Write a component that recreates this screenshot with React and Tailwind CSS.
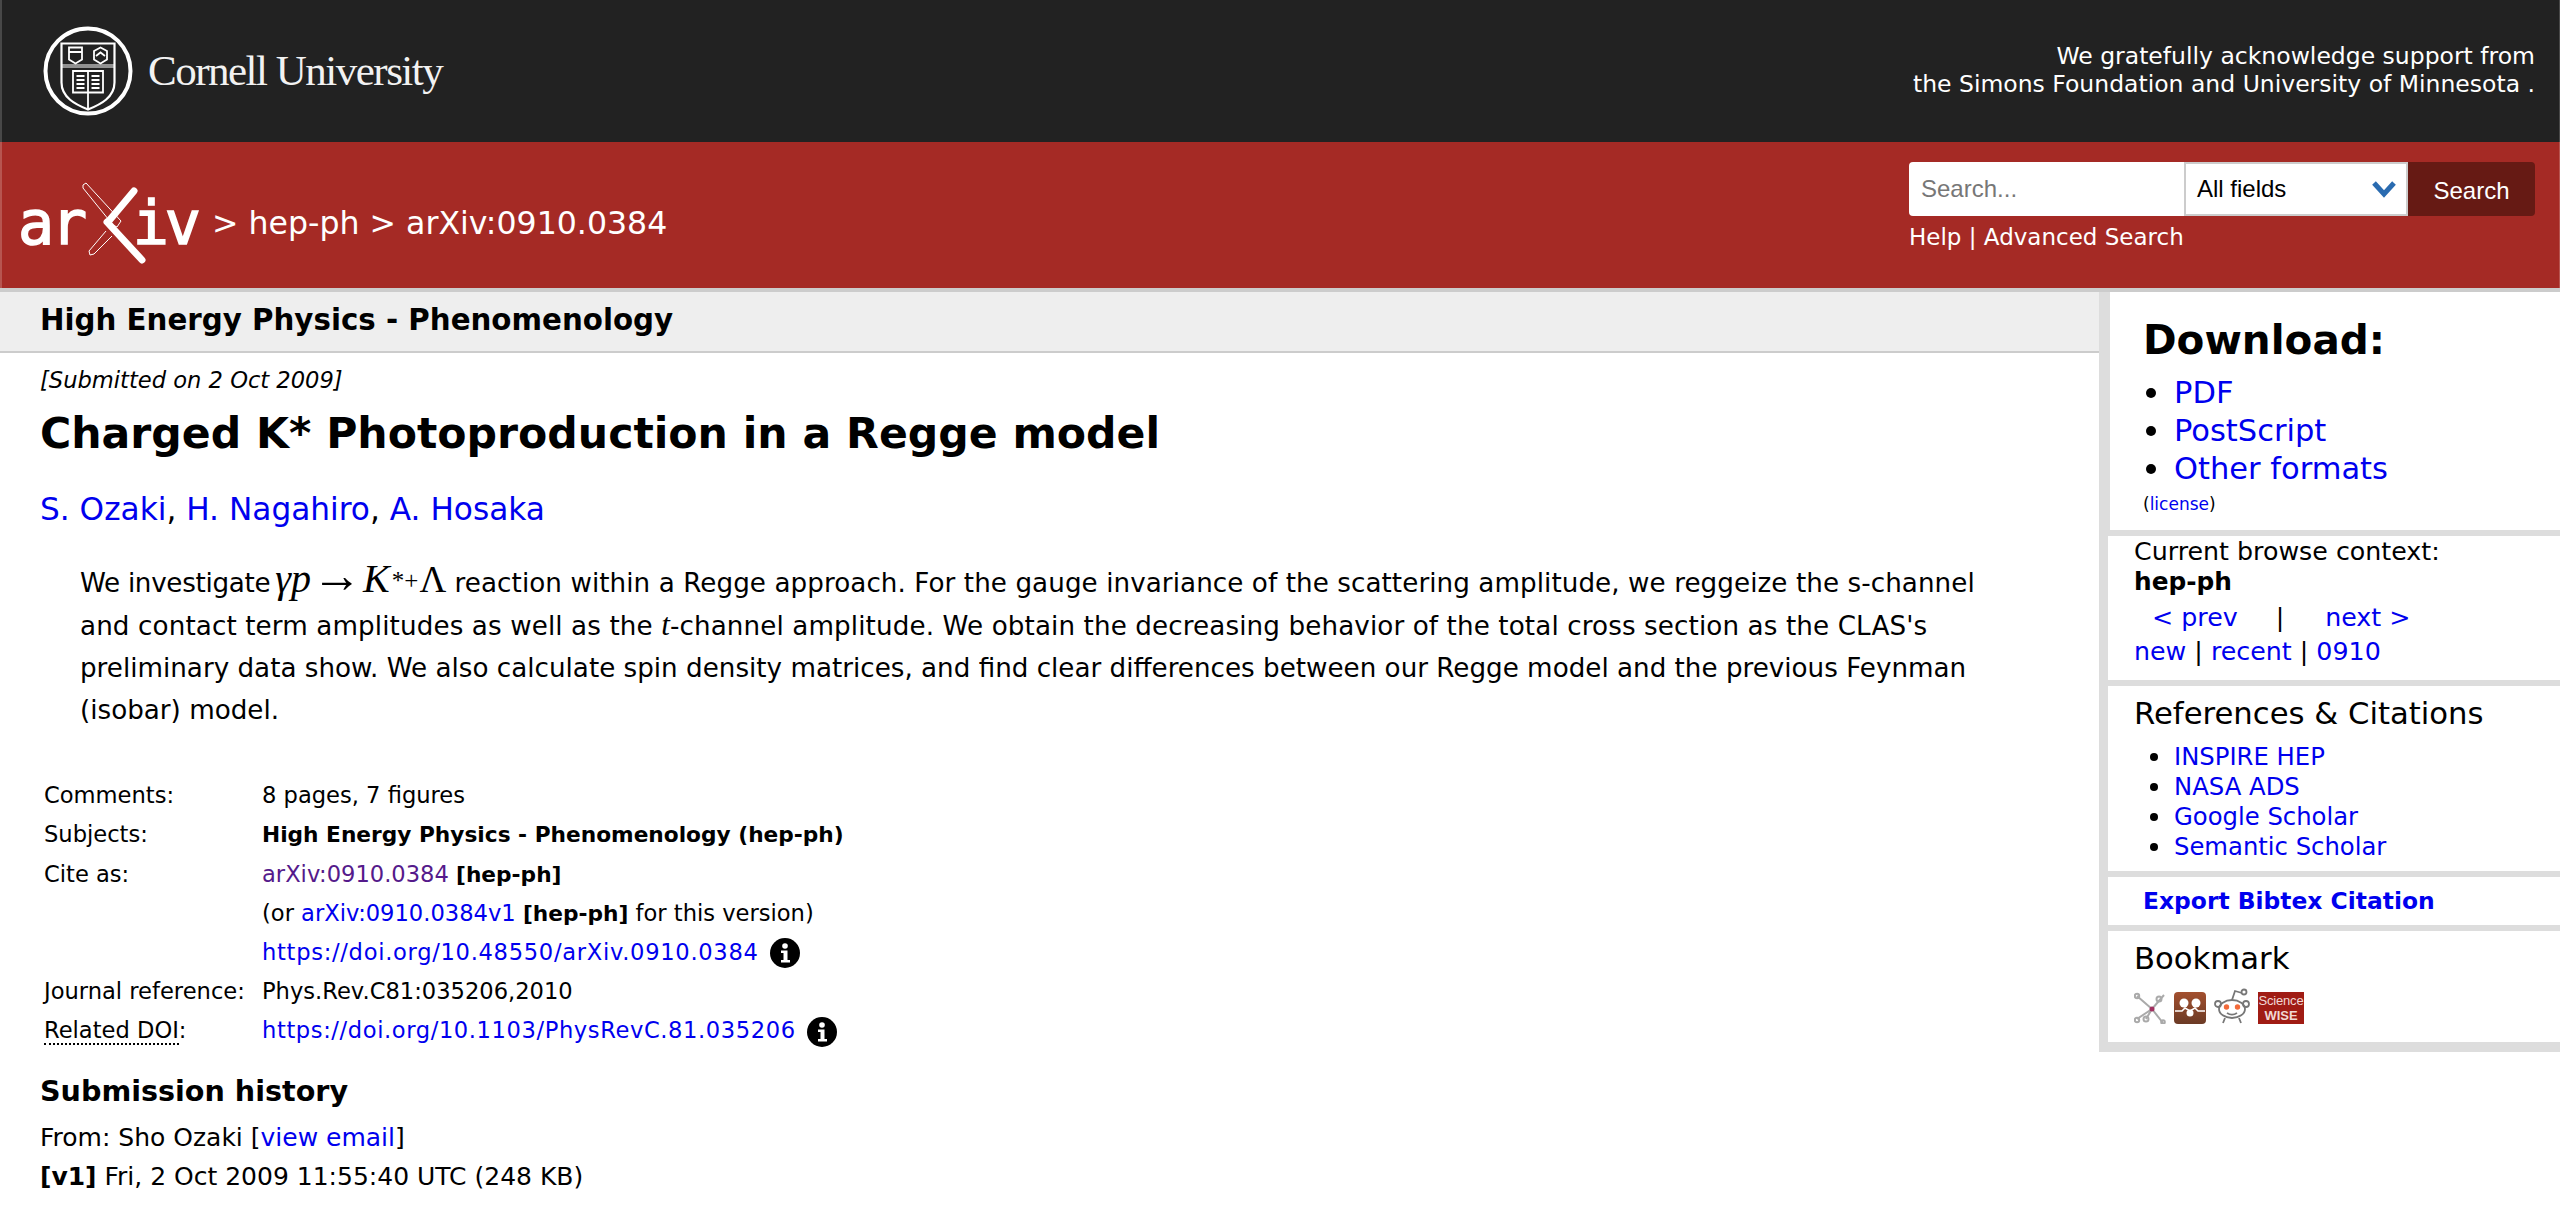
import React from "react";

function CornellSeal() {
  return (
    <svg width="92" height="92" viewBox="0 0 92 92" fill="none" stroke="#fff" className="shrink-0">
      <circle cx="46" cy="46" r="42.5" strokeWidth="4" />
      <path d="M19.5 18.5h53v39c0 15-14 22-26.500 27-12.500-5-26.500-12-26.500-27z" strokeWidth="2.200" />
      <path d="M19.500 40h53M19 42h54" strokeWidth="1.200" />
      <path d="M27 22.500h13v12l-6.500 4-6.500-4zM27 27h13" strokeWidth="1.800" />
      <path d="M52 26l6.500-3.500 6.500 3.500v8.500l-6.500 4-6.500-4zM54 31l4.500-3.500 4.500 3.500" strokeWidth="1.800" />
      <path d="M31 46h30v21.500H31zM46 46v38" strokeWidth="1.800" />
      <path d="M34.500 51h8M34.500 55h8M34.500 59h8M34.500 63h8M49.500 51h8M49.500 55h8M49.500 59h8M49.500 63h8" strokeWidth="2" />
    </svg>
  );
}

function ArxivLogo() {
  return (
    <div className="relative w-[178px] h-[84px] shrink-0 flex justify-between font-['DejaVu_Sans_Mono',monospace] text-[60px] leading-[84px] text-white [-webkit-text-stroke:1.5px_white]">
      <span className="tracking-[-3px] -ml-[2px]">ar</span>
      <span className="tracking-[-4px] mr-[1px]">iv</span>
      <svg width="178" height="84" viewBox="0 0 178 84" className="absolute left-0 top-0">
        <path d="M114 10L88 41" stroke="#fff" strokeWidth="7" strokeLinecap="round" />
        <path d="M87 41L122 79" stroke="#fff" strokeWidth="7" strokeLinecap="round" />
        <path d="M63 4l3-2 35 38-4 6-4-2L63 7zM92 55L74 73l-4 1-1-4 17-20" fill="none" stroke="#fff" strokeWidth="1" />
      </svg>
    </div>
  );
}

function InfoIcon() {
  return (
    <svg width="30" height="30" viewBox="0 0 30 30" className="inline-block align-middle">
      <circle cx="15" cy="15" r="15" fill="#000" />
      <circle cx="15" cy="8" r="2.800" fill="#fff" />
      <path d="M11 12.500h6.500v9.500H20v2.500h-9V22h2.500v-7H11z" fill="#fff" />
    </svg>
  );
}

function BookmarkIcons() {
  return (
    <div className="flex items-end gap-[8px] mt-[9px]">
      <svg width="32" height="32" viewBox="0 0 32 32" fill="none" stroke="#aaa" strokeWidth="2">
        <path d="M3 4l15 13M30 3L18 17M18 17l11 14M18 17L3 27M18 17L12 27" />
        <circle cx="3" cy="4" r="2.200" />
        <circle cx="25" cy="7" r="2.500" />
        <circle cx="29" cy="30" r="1.800" />
        <circle cx="3" cy="28" r="2.200" />
        <circle cx="12" cy="27" r="2.500" />
        <circle cx="18" cy="17" r="2.500" fill="#a03060" stroke="none" />
      </svg>
      <svg width="32" height="32" viewBox="0 0 32 32">
        <defs>
          <linearGradient id="bibsonomy" x1="0" y1="0" x2="0" y2="1">
            <stop offset="0" stopColor="#a3502f" />
            <stop offset="1" stopColor="#6b3a25" />
          </linearGradient>
        </defs>
        <rect width="32" height="32" rx="4" fill="url(#bibsonomy)" />
        <circle cx="10" cy="11" r="4.500" fill="#fff" />
        <circle cx="22" cy="11" r="4.500" fill="#fff" />
        <circle cx="16" cy="21" r="3.500" fill="#fff" />
        <path d="M1 19h7l3-3 5 3 5-3 3 3h7" fill="none" stroke="#fff" strokeWidth="1.500" />
      </svg>
      <svg width="36" height="36" viewBox="0 0 36 36" fill="none" stroke="#777" strokeWidth="1.800">
        <ellipse cx="18" cy="21" rx="13" ry="9" fill="#fff" />
        <circle cx="4" cy="16" r="3" />
        <circle cx="32" cy="16" r="3" />
        <path d="M18 12l3-9 7 2M11 30l-2 5M25 30l2 5" />
        <circle cx="30" cy="4" r="2.500" />
        <circle cx="12.500" cy="19" r="2.700" fill="#f26a3a" stroke="none" />
        <circle cx="23.500" cy="19" r="2.700" fill="#f26a3a" stroke="none" />
        <path d="M13 25c3 2 7 2 10 0" />
      </svg>
      <div className="w-[46px] h-[32px] bg-[#a01c14] text-[#f0d8d4] flex flex-col items-center justify-center font-['Liberation_Sans',sans-serif] text-[13px] leading-[15px]">
        <span className="tracking-[-0.200px]">Science</span>
        <span className="font-bold">WISE</span>
      </div>
    </div>
  );
}

function MetaRow({ label, children }) {
  return (
    <div className="flex items-center h-[39.200px]">
      <div className="w-[218px] shrink-0">{label}</div>
      <div>{children}</div>
    </div>
  );
}

function ListItem({ dot, w, left, children }) {
  return (
    <li className="flex items-center">
      <span className={`${w} shrink-0 ${left}`}>
        <span className={`block rounded-full bg-black ${dot}`} />
      </span>
      <span className={link}>{children}</span>
    </li>
  );
}

const link = "text-[#0000ee]";

export default function App() {
  return (
    <div className="font-['DejaVu_Sans',sans-serif] text-black bg-white h-[1225px] overflow-hidden">
      <div className="h-[142px] bg-[#222222] border-l-[2px] border-r-[1px] border-[#484848] flex items-center justify-between pl-[40px] pr-[24px] text-white">
        <div className="flex items-center gap-[14px]">
          <CornellSeal />
          <span className="font-['Liberation_Serif',serif] text-[43px] tracking-[-1.500px] text-[#f2f2f2]">Cornell University</span>
        </div>
        <div className="text-right text-[23.500px] leading-[28px] pb-[3px]">
          We gratefully acknowledge support from<br />the Simons Foundation and University of Minnesota .
        </div>
      </div>

      <div className="h-[146px] bg-[#a52a25] border-l-[2px] border-r-[1px] border-[#b75550] flex justify-between pl-[18px] pr-[24px] text-white">
        <div className="flex items-center gap-[14px] pt-[16px]">
          <ArxivLogo />
          <span className="text-[31.600px] leading-[40px]">&gt; hep-ph &gt; arXiv:0910.0384</span>
        </div>
        <div className="pt-[20px] w-[626px]">
          <div className="flex h-[54px] font-['Liberation_Sans',sans-serif] text-[24px]">
            <div className="w-[275px] bg-white rounded-l-[4px] text-[#777777] pl-[12px] flex items-center">Search...</div>
            <div className="w-[224px] bg-white border-[2px] border-[#cccccc] text-black pl-[11px] flex items-center justify-between pr-[10px]">
              All fields
              <svg width="24" height="18" viewBox="0 0 24 18" fill="none" stroke="#2a6bb0" strokeWidth="5">
                <path d="M2 3l10 11L22 3" />
              </svg>
            </div>
            <div className="w-[127px] bg-[#661a14] rounded-r-[4px] flex items-center justify-center text-white pt-[4px]">Search</div>
          </div>
          <div className="text-[23px] mt-[4px]">Help | Advanced Search</div>
        </div>
      </div>

      <div className="h-[4px] bg-[#cccccc]" />

      <div className="flex items-start">
        <div className="flex-1 min-w-0">
          <div className="h-[61px] bg-[#eeeeee] border-b-[2px] border-[#cccccc] pl-[40px] flex items-center text-[29.300px] font-bold pb-[2px]">
            High Energy Physics - Phenomenology
          </div>
          <div className="pl-[40px] pr-[60px]">
            <div className="italic text-[22.600px] mt-[11px]">[Submitted on 2 Oct 2009]</div>
            <h1 className="text-[42.600px] font-bold mt-[5px] leading-[60px]">Charged K* Photoproduction in a Regge model</h1>
            <div className="text-[31.200px] mt-[26px] leading-[40px]">
              <span className={link}>S. Ozaki</span>, <span className={link}>H. Nagahiro</span>, <span className={link}>A. Hosaka</span>
            </div>
            <div className="pl-[40px] mt-[33.500px] text-[26.200px] leading-[42.300px]">
              <span className="tracking-[-0.300px]">We investigate</span>
              <span className="font-['Liberation_Serif',serif] text-[40px] leading-[20px] ml-[-5px]">
                {" "}<i>γp</i> <span className="text-[50px] leading-[20px] mx-[-9px]">→</span> <i>K</i><sup className="text-[25px] leading-[10px] relative top-[-3px] ml-[2px]">*+</sup>
                <span className="text-[37px] ml-[1px]">Λ</span>
              </span>{" "}
              <span className="tracking-[0.070px]">reaction within a Regge approach. For the gauge invariance of the scattering amplitude, we reggeize the s-channel</span><br />
              <span className="tracking-[0.110px]">and contact term amplitudes as well as the <i className="font-['Liberation_Serif',serif] text-[31px] leading-[20px]">t</i>-channel amplitude. We obtain the decreasing behavior of the total cross section as the CLAS's</span><br />
              preliminary data show. We also calculate spin density matrices, and find clear differences between our Regge model and the previous Feynman<br />
              (isobar) model.
            </div>
            <div className="pl-[4px] mt-[45px] text-[22.600px]">
              <MetaRow label="Comments:">8 pages, 7 figures</MetaRow>
              <MetaRow label="Subjects:"><b className="text-[21.700px]">High Energy Physics - Phenomenology (hep-ph)</b></MetaRow>
              <MetaRow label="Cite as:"><span className="text-[#551a8b]">arXiv:0910.0384</span> <b className="text-[21.700px]">[hep-ph]</b></MetaRow>
              <MetaRow label="">(or <span className={link}>arXiv:0910.0384v1</span> <b className="text-[21.700px]">[hep-ph]</b> for this version)</MetaRow>
              <MetaRow label=""><span className={`${link} tracking-[0.700px]`}>https://doi.org/10.48550/arXiv.0910.0384</span> <span className="ml-[4px]"><InfoIcon /></span></MetaRow>
              <MetaRow label="Journal reference:">Phys.Rev.C81:035206,2010</MetaRow>
              <MetaRow label={<span><span className="border-b-[2px] border-dotted border-black">Related DOI</span>:</span>}>
                <span className={`${link} tracking-[0.600px]`}>https://doi.org/10.1103/PhysRevC.81.035206</span> <span className="ml-[4px]"><InfoIcon /></span>
              </MetaRow>
            </div>
            <div className="text-[28.600px] font-bold mt-[20.500px] leading-[40px]">Submission history</div>
            <div className="text-[25px] leading-[39px] mt-[7px]">
              From: Sho Ozaki [<span className={link}>view email</span>]<br />
              <b>[v1]</b> Fri, 2 Oct 2009 11:55:40 UTC (248 KB)
            </div>
          </div>
        </div>

        <aside className="w-[461px] shrink-0 bg-[#dddddd] pl-[9px] pb-[10px]">
          <div className="h-[238px] bg-white border-l-[2px] border-[#dddddd] pl-[33px] pt-[21px]">
            <div className="text-[40.500px] font-bold leading-[54px]">Download:</div>
            <ul className="mt-[7px] text-[30.500px] leading-[38px]">
              <ListItem w="w-[31px]" left="pl-[3px]" dot="w-[10px] h-[10px]">PDF</ListItem>
              <ListItem w="w-[31px]" left="pl-[3px]" dot="w-[10px] h-[10px]">PostScript</ListItem>
              <ListItem w="w-[31px]" left="pl-[3px]" dot="w-[10px] h-[10px]">Other formats</ListItem>
            </ul>
            <div className="text-[17px] leading-[22px] mt-[5px]">(<span className={link}>license</span>)</div>
          </div>
          <div className="mt-[6px] h-[144px] bg-white pl-[26px] text-[25.300px] pt-[1px]">
            <div className="leading-[30px]">Current browse context:</div>
            <div className="font-bold leading-[30px] text-[24.800px]">hep-ph</div>
            <div className="flex leading-[36px] mt-[3px] ml-[18px]">
              <span className={link}>&lt; prev</span>
              <span className="ml-[38px]">|</span>
              <span className={`${link} ml-[41px]`}>next &gt;</span>
            </div>
            <div className="leading-[30px] mt-[1px]"><span className={link}>new</span> | <span className={link}>recent</span> | <span className={link}>0910</span></div>
          </div>
          <div className="mt-[6px] h-[185px] bg-white pl-[26px] pt-[8px]">
            <div className="text-[30.700px] leading-[40px]">References &amp; Citations</div>
            <ul className="text-[24.300px] leading-[30px] mt-[8px]">
              <ListItem w="w-[40px]" left="pl-[16px]" dot="w-[8px] h-[8px]">INSPIRE HEP</ListItem>
              <ListItem w="w-[40px]" left="pl-[16px]" dot="w-[8px] h-[8px]">NASA ADS</ListItem>
              <ListItem w="w-[40px]" left="pl-[16px]" dot="w-[8px] h-[8px]">Google Scholar</ListItem>
              <ListItem w="w-[40px]" left="pl-[16px]" dot="w-[8px] h-[8px]">Semantic Scholar</ListItem>
            </ul>
          </div>
          <div className="mt-[6px] h-[48px] bg-white pl-[35px] pt-[2px] flex items-center text-[23.400px] font-bold">
            <span className={link}>Export Bibtex Citation</span>
          </div>
          <div className="mt-[6px] h-[111px] bg-white pl-[26px] pt-[8px]">
            <div className="text-[30.700px] leading-[40px]">Bookmark</div>
            <BookmarkIcons />
          </div>
        </aside>
      </div>
    </div>
  );
}
